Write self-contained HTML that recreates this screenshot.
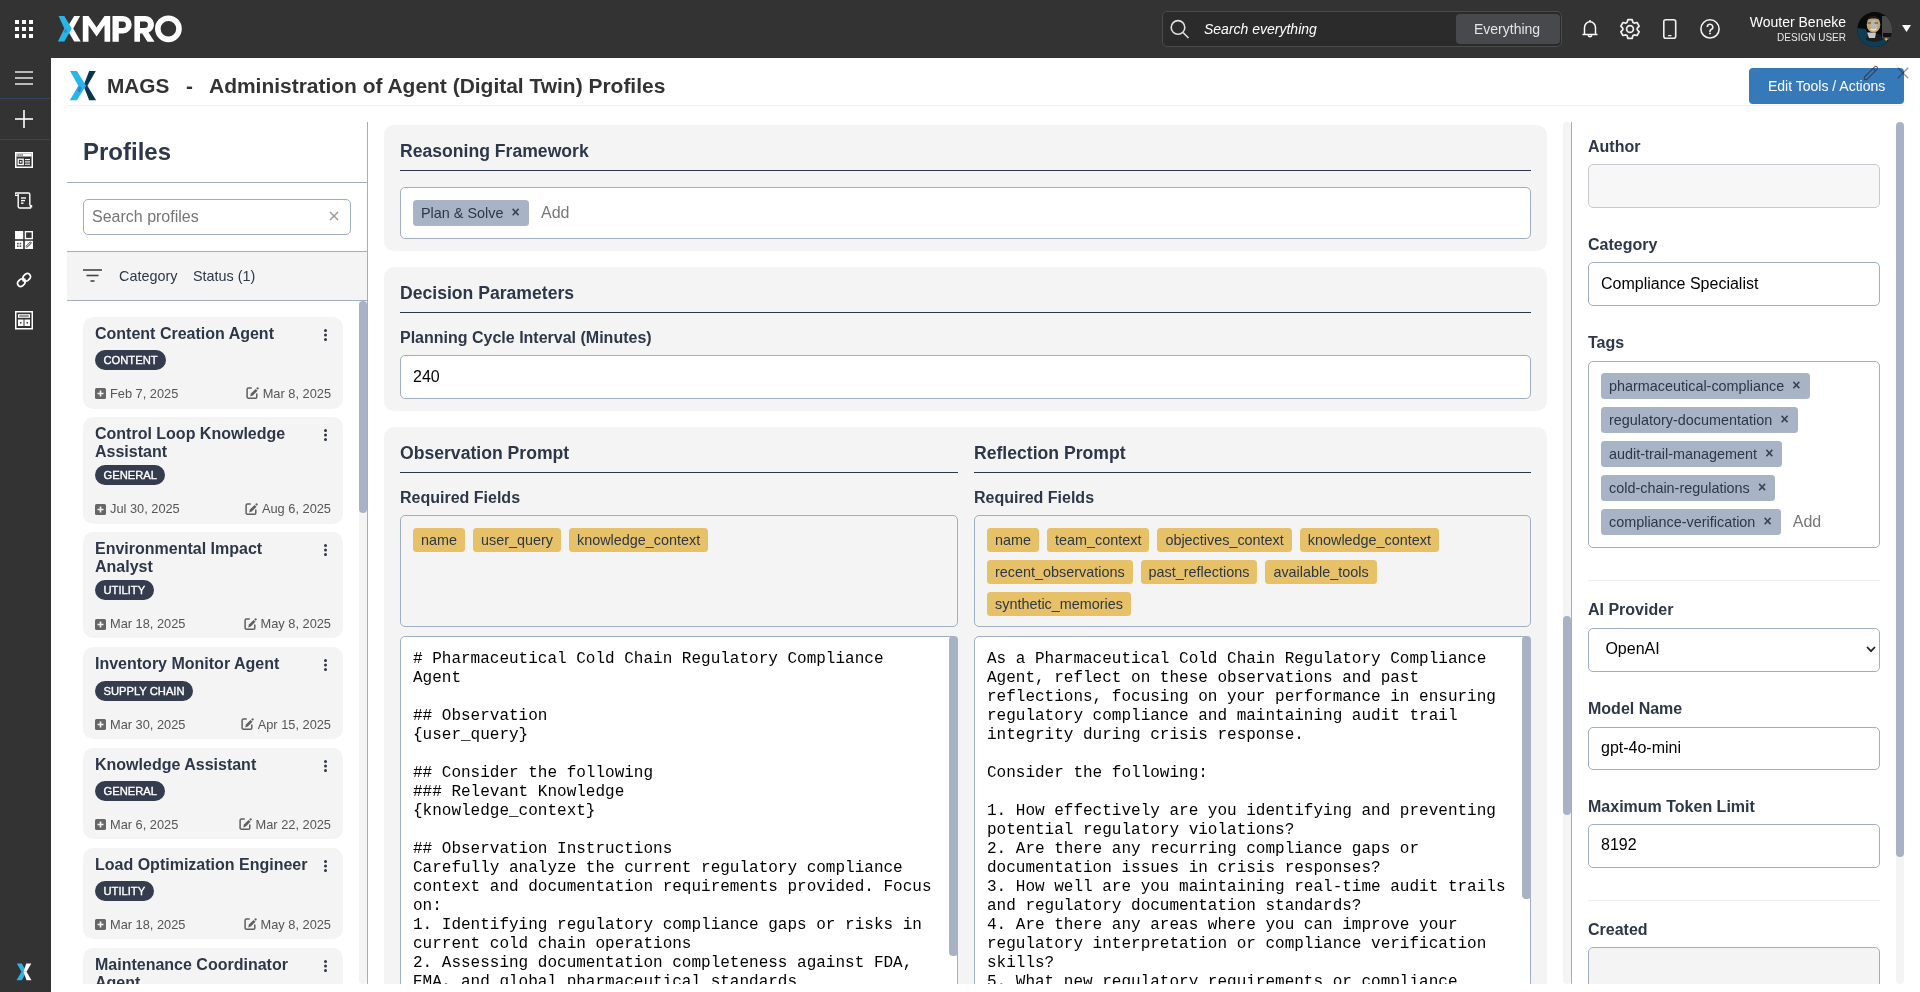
<!DOCTYPE html>
<html><head><meta charset="utf-8">
<style>
*{box-sizing:border-box;margin:0;padding:0}
html,body{width:1920px;height:992px;overflow:hidden;background:#fff;font-family:"Liberation Sans",sans-serif;color:#2d3748}
body{will-change:transform}
.abs{position:absolute}
#topbar{position:absolute;left:0;top:0;width:1920px;height:58px;background:#333333}
#side{position:absolute;left:0;top:58px;width:51px;height:934px;background:#333333}
.sep{position:absolute;left:0;width:50px;height:1px;background:repeating-linear-gradient(90deg,#3b4a62 0 1px,#363b44 1px 2px)}
.t{position:absolute;white-space:nowrap;line-height:1}
.card{position:absolute;left:83px;width:260px;background:#f4f4f4;border-radius:10px}
.ctitle{position:absolute;left:12px;width:220px;font-size:16px;font-weight:bold;line-height:18px;color:#2d3748}
.badge{position:absolute;left:12px;height:20px;border-radius:10px;background:#353c4e;color:#fff;font-size:11.2px;-webkit-text-stroke:0.35px #fff;line-height:20px;padding:0 8.5px;white-space:nowrap}
.kebab{position:absolute;left:240px;width:5px;height:12px}
.date{position:absolute;font-size:12.8px;color:#555;white-space:nowrap;line-height:1}
.sec{position:absolute;left:384px;width:1163px;background:#f4f4f4;border-radius:10px}
.h3{position:absolute;white-space:nowrap;font-size:17.6px;font-weight:bold;line-height:1;color:#2d3748}
.rule{position:absolute;height:1px;background:#2d3748}
.lbl{position:absolute;white-space:nowrap;font-size:16px;font-weight:bold;line-height:1;color:#2d3748}
.inp{position:absolute;background:#fff;border:1px solid #a0aec0;border-radius:5px}
.val{position:absolute;white-space:nowrap;font-size:16px;line-height:1;color:#000}
.chip{display:inline-block;height:26px;line-height:27.6px;border-radius:3.5px;background:#a9b3c6;color:#2d3748;font-size:14.4px;padding:0 9px 0 8px;white-space:nowrap}
.chip .x{display:inline-block;margin-left:8.2px;font-size:14px;font-weight:bold;position:relative;top:-1.5px;color:#3a4252}
.ychip{position:absolute;height:24px;line-height:25.4px;border-radius:3.5px;background:#e6c168;color:#2d3748;font-size:14.4px;padding:0 8px;white-space:nowrap}
.mono{position:absolute;margin-top:0.7px;font-family:"Liberation Mono",monospace;font-size:16px;line-height:19px;white-space:pre;color:#000}
.sb{position:absolute;background:#a8b2c4;border-radius:4px}
</style></head><body>
<div id="topbar">
  <!-- grid icon -->
  <svg class="abs" style="left:15px;top:20px" width="18" height="18" viewBox="0 0 18 18" fill="#fff">
    <rect x="0" y="0" width="4" height="4"/><rect x="7" y="0" width="4" height="4"/><rect x="14" y="0" width="4" height="4"/>
    <rect x="0" y="7" width="4" height="4"/><rect x="7" y="7" width="4" height="4"/><rect x="14" y="7" width="4" height="4"/>
    <rect x="0" y="14" width="4" height="4"/><rect x="7" y="14" width="4" height="4"/><rect x="14" y="14" width="4" height="4"/>
  </svg>
  <!-- XMPRO logo -->
  <svg class="abs" style="left:57px;top:15px" width="126" height="28" viewBox="0 0 126 28">
    <polygon points="17.2,1.1 23.1,1.1 16.2,13.5 23.7,26.5 17.2,26.5 9.5,13.5" fill="#fff"/>
    <polygon points="1.6,1.1 7.3,1.1 14.8,13.5 7.3,26.5 0.9,26.5 7.3,13.5" fill="#29b5e8"/>
    <polygon points="8.6,14.1 10.7,15.6 8.8,18.3 6.8,16.6" fill="#3a86cf"/>
    <polygon points="25.8,1 31.5,1 39.6,12.5 47.5,1 53.2,1 53.2,26.7 47.5,26.7 47.5,10 39.6,21.5 31.5,10 31.5,26.7 25.8,26.7" fill="#fff"/>
    <path d="M55.5,1 H66 A8.7,8.7 0 0 1 66,18.4 H61.8 V26.7 H55.5 Z M61.8,6.4 V13 H65.6 A3.3,3.3 0 0 0 65.6,6.4 Z" fill="#fff" fill-rule="evenodd"/>
    <path d="M77.4,1 H88 A8.6,8.6 0 0 1 91.5,17.6 L97.5,26.7 H90.5 L85.2,18.4 H83 V26.7 H77.4 Z M83,6.4 V13 H87.6 A3.3,3.3 0 0 0 87.6,6.4 Z" fill="#fff" fill-rule="evenodd"/>
    <circle cx="111.4" cy="13.8" r="10.6" fill="none" stroke="#fff" stroke-width="5.6"/>
  </svg>
  <!-- search -->
  <div class="abs" style="left:1162px;top:11px;width:400px;height:36px;background:#2b2b2b;border:1px solid #4b4b4b;border-radius:5px"></div>
  <svg class="abs" style="left:1169px;top:18px" width="22" height="22" viewBox="0 0 22 22" fill="none" stroke="#e0e0e0" stroke-width="1.6">
    <circle cx="9" cy="9.4" r="6.8"/><line x1="14" y1="14.5" x2="19.5" y2="20"/>
  </svg>
  <div class="t" style="left:1204px;top:21.7px;font-size:14px;font-style:italic;color:#fff">Search everything</div>
  <div class="abs" style="left:1456px;top:14px;width:104px;height:30px;background:#48494c;border-radius:4px"></div>
  <div class="t" style="left:1474px;top:21.8px;font-size:14px;color:#e4e4e4">Everything</div>
  <!-- bell -->
  <svg class="abs" style="left:1580px;top:18px" width="20" height="22" viewBox="0 0 20 22" fill="none" stroke="#fff" stroke-width="1.5" stroke-linejoin="round">
    <path d="M4.5,16.5 V9.5 A5.5,5.8 0 0 1 15.5,9.5 V16.5 Z M2.5,16.5 H17.5 M8.2,17.5 A1.9,1.9 0 0 0 11.8,17.5 M10,2 V3.5"/>
  </svg>
  <!-- gear -->
  <svg class="abs" style="left:1618px;top:17px" width="24" height="24" viewBox="0 0 24 24" fill="none" stroke="#f0f0f0" stroke-width="1.7" stroke-linejoin="round">
    <path d="M15.00,5.45 L14.10,2.63 L9.90,2.63 L9.00,5.45 L7.83,6.13 L4.94,5.50 L2.84,9.13 L4.83,11.33 L4.83,12.67 L2.84,14.87 L4.94,18.50 L7.83,17.87 L9.00,18.55 L9.90,21.37 L14.10,21.37 L15.00,18.55 L16.17,17.87 L19.06,18.50 L21.16,14.87 L19.17,12.67 L19.17,11.33 L21.16,9.13 L19.06,5.50 L16.17,6.13 Z"/>
    <circle cx="12" cy="12" r="3.4"/>
  </svg>
  <!-- phone -->
  <svg class="abs" style="left:1663px;top:19px" width="14" height="20" viewBox="0 0 14 20" fill="none" stroke="#f2f2f2" stroke-width="1.6">
    <rect x="0.8" y="0.8" width="11.9" height="18.4" rx="2"/><line x1="5.6" y1="16.6" x2="8" y2="16.6" stroke-width="1.4" stroke-linecap="round"/>
  </svg>
  <!-- help -->
  <svg class="abs" style="left:1699px;top:18px" width="22" height="22" viewBox="0 0 22 22" fill="none" stroke="#f2f2f2" stroke-width="1.6">
    <circle cx="11" cy="10.9" r="9.1"/>
    <path d="M8.3,9 A2.75,2.75 0 1 1 12.2,11.5 C11.3,11.9 11,12.4 11,13.2 V13.9"/>
    <rect x="10.1" y="14.7" width="1.8" height="1.5" fill="#f2f2f2" stroke="none"/>
  </svg>
  <div class="t" style="right:74px;top:15px;font-size:14px;color:#fff">Wouter Beneke</div>
  <div class="t" style="right:74px;top:33px;font-size:10px;color:#e8e8e8">DESIGN USER</div>
  <!-- avatar -->
  <svg class="abs" style="left:1857px;top:12px" width="36" height="36" viewBox="0 0 36 36">
    <defs><clipPath id="av"><circle cx="17.7" cy="17.6" r="17.5"/></clipPath></defs>
    <g clip-path="url(#av)">
      <rect width="36" height="36" fill="#0a0a0a"/>
      <rect x="25" y="4" width="11" height="24" fill="#4a4a4a"/>
      <rect x="26" y="21" width="9" height="4" fill="#111"/>
      <path d="M0,16 L9,17 L11,24 L26,26 L31,29 L31,36 L0,36 Z" fill="#0e3d56"/>
      <path d="M9,28 C9,24 12,21 17,21 C23,21 25,24 26,28 L17,30 Z" fill="#1e1e1e"/>
      <path d="M10,20.5 L19,20.5 L18,26 L12,26 Z" fill="#c8c8c8"/>
      <ellipse cx="16.5" cy="12.5" rx="6.8" ry="8" fill="#c2a66e"/>
      <ellipse cx="17" cy="13" rx="3.5" ry="5" fill="#b8b8b0"/>
      <path d="M10.5,11 H14 M17.5,11 H21" stroke="#444" stroke-width="1.2"/>
      <path d="M13.5,17 Q16.5,19 19.5,17" stroke="#eee" stroke-width="1.3" fill="none"/>
      <path d="M9.5,8 C11,2.5 22,2.5 23.5,8 C20,6 13,6 9.5,8 Z" fill="#1a1a1a"/>
      <rect x="28" y="26" width="2.5" height="2.5" fill="#c9a864" transform="rotate(45 29.2 27.2)"/>
    </g>
  </svg>
  <svg class="abs" style="left:1902px;top:25px" width="9" height="7" viewBox="0 0 9 7"><polygon points="0,0 9,0 4.5,7" fill="#fff"/></svg>
</div>

<div id="side">
  <svg class="abs" style="left:15px;top:13px" width="18" height="14" viewBox="0 0 18 14" stroke="#ddd" stroke-width="1.6"><line x1="0" y1="1" x2="18" y2="1"/><line x1="0" y1="7" x2="18" y2="7"/><line x1="0" y1="13" x2="18" y2="13"/></svg>
  <div class="sep" style="top:40px"></div>
  <svg class="abs" style="left:15px;top:52px" width="18" height="18" viewBox="0 0 18 18" stroke="#fff" stroke-width="1.6"><line x1="0" y1="9" x2="18" y2="9"/><line x1="9" y1="0" x2="9" y2="18"/></svg>
  <div class="sep" style="top:81px"></div>

  <svg class="abs" style="left:15px;top:94px" width="18" height="16" viewBox="0 0 18 16" fill="none" stroke="#fff">
    <rect x="0.75" y="0.75" width="16.5" height="14.5" stroke-width="1.5"/>
    <rect x="1.5" y="1.5" width="15" height="3" fill="#fff" stroke="none"/>
    <rect x="2.5" y="2.3" width="1.2" height="1.4" fill="#333" stroke="none"/><rect x="4.5" y="2.3" width="1.2" height="1.4" fill="#333" stroke="none"/><rect x="6.5" y="2.3" width="1.2" height="1.4" fill="#333" stroke="none"/>
    <rect x="3.2" y="7.2" width="5" height="5.3" stroke-width="1.3"/><rect x="4.9" y="9" width="1.6" height="1.6" fill="#fff" stroke="none"/>
    <line x1="10" y1="7.6" x2="15" y2="7.6" stroke-width="1.1"/><line x1="10" y1="9.9" x2="15" y2="9.9" stroke-width="1.1"/><line x1="10" y1="12.2" x2="15" y2="12.2" stroke-width="1.1"/>
  </svg>
  <svg class="abs" style="left:15px;top:134px" width="18" height="17" viewBox="0 0 18 17" fill="none" stroke="#fff" stroke-width="1.4">
    <path d="M1,1 H13.5 A1.3,1.3 0 0 1 14.8,2.3 V13.5"/>
    <path d="M1,1 A1.2,1.2 0 0 0 1,3.4 H3.2"/>
    <path d="M3.2,2 V14.5 A1.5,1.5 0 0 0 4.7,16 H16.2"/>
    <rect x="14.8" y="13" width="2.4" height="2.6" fill="#fff" stroke="none"/>
    <line x1="6" y1="6" x2="11" y2="6"/><line x1="6" y1="8.6" x2="10" y2="8.6"/><line x1="6" y1="11.2" x2="8.5" y2="11.2"/>
  </svg>
  <svg class="abs" style="left:15px;top:173px" width="18" height="18" viewBox="0 0 18 18">
    <rect x="0" y="0" width="8.2" height="8.2" fill="#fff"/>
    <rect x="10.4" y="0.7" width="6.9" height="6.9" fill="none" stroke="#fff" stroke-width="1.4"/>
    <rect x="0" y="9.8" width="8.2" height="8.2" fill="#fff"/>
    <rect x="2" y="11.8" width="1.6" height="1.6" fill="#555"/><rect x="4.6" y="11.8" width="1.6" height="1.6" fill="#555"/>
    <rect x="2" y="14.4" width="1.6" height="1.6" fill="#555"/><rect x="4.6" y="14.4" width="1.6" height="1.6" fill="#555"/>
    <rect x="9.8" y="9.8" width="8.2" height="8.2" fill="#fff"/>
    <path d="M11.8,15.5 L15.5,11.8" stroke="#555" stroke-width="2.4" stroke-linecap="round"/>
    <path d="M11.8,15.5 L15.5,11.8" stroke="#fff" stroke-width="0.9" stroke-linecap="round"/>
  </svg>
  <svg class="abs" style="left:15px;top:213px" width="18" height="18" viewBox="0 0 18 18" fill="none" stroke="#fff" stroke-width="1.7">
    <path d="M7.6,10.4 L10.4,7.6"/>
    <path d="M8.4,5.2 L10.6,3 A3.2,3.2 0 0 1 15,7.4 L12.8,9.6 A3.2,3.2 0 0 1 8.4,5.2 Z"/>
    <path d="M5.2,8.4 L3,10.6 A3.2,3.2 0 0 0 7.4,15 L9.6,12.8 A3.2,3.2 0 0 0 5.2,8.4 Z"/>
  </svg>
  <svg class="abs" style="left:15px;top:253px" width="18" height="19" viewBox="0 0 18 19">
    <rect x="0" y="0" width="18" height="18.5" fill="#fff"/>
    <rect x="1.5" y="1.5" width="15" height="15.5" fill="#333"/>
    <rect x="3" y="3.2" width="12" height="3.6" fill="#fff"/><rect x="4.2" y="4.5" width="9.6" height="1" fill="#333"/>
    <rect x="3" y="8.5" width="5.5" height="6.5" fill="#fff"/><rect x="9.5" y="8.5" width="5.5" height="6.5" fill="#fff"/>
    <rect x="5" y="11" width="1.5" height="1.5" fill="#333"/><rect x="11.5" y="11" width="1.5" height="1.5" fill="#333"/>
  </svg>
  <svg class="abs" style="left:16px;top:905px" width="16" height="18" viewBox="0 0 16 18">
    <polygon points="0.8,0.5 5.8,0.5 10.5,8.8 5.5,8.8" fill="#29b5e8"/>
    <polygon points="5.5,8.8 10.5,8.8 5.8,17.2 0.5,17.2" fill="#29b5e8"/>
    <polygon points="10.2,0.5 15.3,0.5 10.5,8.8 7.5,8.8" fill="#fff"/>
    <polygon points="7.5,8.8 10.5,8.8 15.5,17.2 10.5,17.2" fill="#fff"/>
  </svg>
</div>

<!-- HEADER -->
<svg class="abs" style="left:66px;top:68px" width="34" height="36" viewBox="0 0 34 36">
  <polygon points="23.2,3.1 29.8,3.1 21.4,17.8 30.1,32.3 23.2,32.3 17.4,17.8" fill="#0c3550"/>
  <polygon points="4,3.1 10.9,3.1 20,17.8 10.9,32.3 3.8,32.3 12.3,17.8" fill="#29b5e8"/>
  <polygon points="13.5,18.1 15.8,20 13.5,24.7 11.2,22.5" fill="#3a7fc8"/>
</svg>
<div class="t" style="left:107px;top:76px;font-size:20.8px;font-weight:bold;color:#333">MAGS</div>
<div class="t" style="left:186px;top:76px;font-size:20.8px;font-weight:bold;color:#333">-</div>
<div class="t" style="left:209px;top:75.8px;font-size:20.96px;font-weight:bold;color:#333">Administration of Agent (Digital Twin) Profiles</div>
<div class="abs" style="left:67px;top:105px;width:1837px;height:1px;background:#f0f0f0"></div>
<div class="abs" style="left:1749px;top:68px;width:155px;height:36px;background:#3679b9;border-radius:4px"></div>
<div class="t" style="left:1768px;top:79px;font-size:14px;color:#fff">Edit Tools / Actions</div>
<svg class="abs" style="left:1862px;top:64px" width="18" height="18" viewBox="0 0 18 18" fill="none" stroke="rgba(50,50,50,0.75)" stroke-width="1.1" stroke-linejoin="round">
  <path d="M2.5,13 L12.6,2.9 A1.6,1.6 0 0 1 15,5.3 L4.9,15.4 L2.3,15.6 Z"/><line x1="11.2" y1="4.3" x2="13.6" y2="6.7"/>
</svg>
<svg class="abs" style="left:1897px;top:67px" width="12" height="12" viewBox="0 0 12 12" stroke="rgba(40,40,40,0.5)" stroke-width="1.3"><line x1="0.8" y1="0.8" x2="11.2" y2="11.2"/><line x1="11.2" y1="0.8" x2="0.8" y2="11.2"/></svg>

<!-- LEFT PANEL -->
<div class="t" style="left:83px;top:140px;font-size:24px;font-weight:bold;color:#2d3748">Profiles</div>
<div class="abs" style="left:67px;top:182px;width:301px;height:1px;background:#a0aec0"></div>
<div class="abs" style="left:367px;top:122px;width:1px;height:862px;background:#a0aec0"></div>
<div class="abs" style="left:83px;top:199px;width:268px;height:36px;border:1px solid #a0aec0;border-radius:5px;background:#fff"></div>
<div class="t" style="left:92px;top:209.2px;font-size:16px;color:#757575">Search profiles</div>
<svg class="abs" style="left:329px;top:211px" width="10" height="10" viewBox="0 0 10 10" stroke="#999" stroke-width="1.4"><line x1="1" y1="1" x2="9" y2="9"/><line x1="9" y1="1" x2="1" y2="9"/></svg>
<div class="abs" style="left:67px;top:251px;width:300px;height:50px;background:#f4f4f4;border-top:1px solid #a0aec0;border-bottom:1px solid #a0aec0"></div>
<svg class="abs" style="left:83px;top:269px" width="20" height="14" viewBox="0 0 20 14" stroke="#444" stroke-width="1.6"><line x1="0" y1="1" x2="19" y2="1"/><line x1="3.5" y1="6.5" x2="15.5" y2="6.5"/><line x1="7.5" y1="12" x2="11.5" y2="12"/></svg>
<div class="t" style="left:119px;top:269px;font-size:14.4px;color:#2d3748">Category</div>
<div class="t" style="left:193px;top:269px;font-size:14.4px;color:#2d3748">Status (1)</div>
<div class="abs" style="left:359px;top:301px;width:8px;height:683px;background:#f4f4f4;border-radius:0 0 4px 4px"></div>
<div class="abs" style="left:359px;top:301px;width:8px;height:212px;background:#a8b2c4;border-radius:4px"></div>
<div class="abs" style="left:67px;top:301px;width:292px;height:683px;overflow:hidden">
<div style="position:absolute;left:-67px;top:-301px;width:400px;height:1000px">
<div class="card" style="top:317px;height:92px"><div class="ctitle" style="top:7.9px">Content Creation Agent</div><svg class="kebab" style="top:12px" viewBox="0 0 5 12"><circle cx="2.5" cy="1.6" r="1.5" fill="#2d3748"/><circle cx="2.5" cy="6" r="1.5" fill="#2d3748"/><circle cx="2.5" cy="10.4" r="1.5" fill="#2d3748"/></svg><div class="badge" style="top:33px">CONTENT</div><svg class="abs" style="left:12px;top:71px" width="11" height="11" viewBox="0 0 11 11"><rect width="11" height="11" rx="1.5" fill="#666"/><path d="M5.5,2.5 V8.5 M2.5,5.5 H8.5" stroke="#f4f4f4" stroke-width="1.6"/></svg><div class="date" style="left:27px;top:70.5px">Feb 7, 2025</div><div class="date" style="right:12px;top:70.5px;display:flex;align-items:center"><svg width="13" height="12" viewBox="0 0 13 12" style="margin:-1px 4px 0 0"><path d="M5.2,1.1 H2.4 A1.3,1.3 0 0 0 1.1,2.4 V9.9 A1.3,1.3 0 0 0 2.4,11.2 H9.5 A1.3,1.3 0 0 0 10.8,9.9 V6.9" fill="none" stroke="#5f5f5f" stroke-width="1.5" stroke-linecap="round"/><polygon points="4.2,9.4 4.9,6.6 9.6,1.9 11.5,3.8 6.8,8.5" fill="#5f5f5f"/><path d="M10.2,1.3 L11,0.5 A0.9,0.9 0 0 1 12.2,0.5 L12.5,0.8 A0.9,0.9 0 0 1 12.5,2 L11.7,2.8 Z" fill="#5f5f5f"/></svg>Mar 8, 2025</div></div>
<div class="card" style="top:417px;height:107px"><div class="ctitle" style="top:7.9px">Control Loop Knowledge<br>Assistant</div><svg class="kebab" style="top:12px" viewBox="0 0 5 12"><circle cx="2.5" cy="1.6" r="1.5" fill="#2d3748"/><circle cx="2.5" cy="6" r="1.5" fill="#2d3748"/><circle cx="2.5" cy="10.4" r="1.5" fill="#2d3748"/></svg><div class="badge" style="top:47.5px">GENERAL</div><svg class="abs" style="left:12px;top:86.5px" width="11" height="11" viewBox="0 0 11 11"><rect width="11" height="11" rx="1.5" fill="#666"/><path d="M5.5,2.5 V8.5 M2.5,5.5 H8.5" stroke="#f4f4f4" stroke-width="1.6"/></svg><div class="date" style="left:27px;top:86.0px">Jul 30, 2025</div><div class="date" style="right:12px;top:86.0px;display:flex;align-items:center"><svg width="13" height="12" viewBox="0 0 13 12" style="margin:-1px 4px 0 0"><path d="M5.2,1.1 H2.4 A1.3,1.3 0 0 0 1.1,2.4 V9.9 A1.3,1.3 0 0 0 2.4,11.2 H9.5 A1.3,1.3 0 0 0 10.8,9.9 V6.9" fill="none" stroke="#5f5f5f" stroke-width="1.5" stroke-linecap="round"/><polygon points="4.2,9.4 4.9,6.6 9.6,1.9 11.5,3.8 6.8,8.5" fill="#5f5f5f"/><path d="M10.2,1.3 L11,0.5 A0.9,0.9 0 0 1 12.2,0.5 L12.5,0.8 A0.9,0.9 0 0 1 12.5,2 L11.7,2.8 Z" fill="#5f5f5f"/></svg>Aug 6, 2025</div></div>
<div class="card" style="top:532px;height:106px"><div class="ctitle" style="top:7.9px">Environmental Impact<br>Analyst</div><svg class="kebab" style="top:12px" viewBox="0 0 5 12"><circle cx="2.5" cy="1.6" r="1.5" fill="#2d3748"/><circle cx="2.5" cy="6" r="1.5" fill="#2d3748"/><circle cx="2.5" cy="10.4" r="1.5" fill="#2d3748"/></svg><div class="badge" style="top:47.5px">UTILITY</div><svg class="abs" style="left:12px;top:86.5px" width="11" height="11" viewBox="0 0 11 11"><rect width="11" height="11" rx="1.5" fill="#666"/><path d="M5.5,2.5 V8.5 M2.5,5.5 H8.5" stroke="#f4f4f4" stroke-width="1.6"/></svg><div class="date" style="left:27px;top:86.0px">Mar 18, 2025</div><div class="date" style="right:12px;top:86.0px;display:flex;align-items:center"><svg width="13" height="12" viewBox="0 0 13 12" style="margin:-1px 4px 0 0"><path d="M5.2,1.1 H2.4 A1.3,1.3 0 0 0 1.1,2.4 V9.9 A1.3,1.3 0 0 0 2.4,11.2 H9.5 A1.3,1.3 0 0 0 10.8,9.9 V6.9" fill="none" stroke="#5f5f5f" stroke-width="1.5" stroke-linecap="round"/><polygon points="4.2,9.4 4.9,6.6 9.6,1.9 11.5,3.8 6.8,8.5" fill="#5f5f5f"/><path d="M10.2,1.3 L11,0.5 A0.9,0.9 0 0 1 12.2,0.5 L12.5,0.8 A0.9,0.9 0 0 1 12.5,2 L11.7,2.8 Z" fill="#5f5f5f"/></svg>May 8, 2025</div></div>
<div class="card" style="top:647px;height:92px"><div class="ctitle" style="top:7.9px">Inventory Monitor Agent</div><svg class="kebab" style="top:12px" viewBox="0 0 5 12"><circle cx="2.5" cy="1.6" r="1.5" fill="#2d3748"/><circle cx="2.5" cy="6" r="1.5" fill="#2d3748"/><circle cx="2.5" cy="10.4" r="1.5" fill="#2d3748"/></svg><div class="badge" style="top:34px">SUPPLY CHAIN</div><svg class="abs" style="left:12px;top:72px" width="11" height="11" viewBox="0 0 11 11"><rect width="11" height="11" rx="1.5" fill="#666"/><path d="M5.5,2.5 V8.5 M2.5,5.5 H8.5" stroke="#f4f4f4" stroke-width="1.6"/></svg><div class="date" style="left:27px;top:71.5px">Mar 30, 2025</div><div class="date" style="right:12px;top:71.5px;display:flex;align-items:center"><svg width="13" height="12" viewBox="0 0 13 12" style="margin:-1px 4px 0 0"><path d="M5.2,1.1 H2.4 A1.3,1.3 0 0 0 1.1,2.4 V9.9 A1.3,1.3 0 0 0 2.4,11.2 H9.5 A1.3,1.3 0 0 0 10.8,9.9 V6.9" fill="none" stroke="#5f5f5f" stroke-width="1.5" stroke-linecap="round"/><polygon points="4.2,9.4 4.9,6.6 9.6,1.9 11.5,3.8 6.8,8.5" fill="#5f5f5f"/><path d="M10.2,1.3 L11,0.5 A0.9,0.9 0 0 1 12.2,0.5 L12.5,0.8 A0.9,0.9 0 0 1 12.5,2 L11.7,2.8 Z" fill="#5f5f5f"/></svg>Apr 15, 2025</div></div>
<div class="card" style="top:748px;height:91px"><div class="ctitle" style="top:7.9px">Knowledge Assistant</div><svg class="kebab" style="top:12px" viewBox="0 0 5 12"><circle cx="2.5" cy="1.6" r="1.5" fill="#2d3748"/><circle cx="2.5" cy="6" r="1.5" fill="#2d3748"/><circle cx="2.5" cy="10.4" r="1.5" fill="#2d3748"/></svg><div class="badge" style="top:33px">GENERAL</div><svg class="abs" style="left:12px;top:71px" width="11" height="11" viewBox="0 0 11 11"><rect width="11" height="11" rx="1.5" fill="#666"/><path d="M5.5,2.5 V8.5 M2.5,5.5 H8.5" stroke="#f4f4f4" stroke-width="1.6"/></svg><div class="date" style="left:27px;top:70.5px">Mar 6, 2025</div><div class="date" style="right:12px;top:70.5px;display:flex;align-items:center"><svg width="13" height="12" viewBox="0 0 13 12" style="margin:-1px 4px 0 0"><path d="M5.2,1.1 H2.4 A1.3,1.3 0 0 0 1.1,2.4 V9.9 A1.3,1.3 0 0 0 2.4,11.2 H9.5 A1.3,1.3 0 0 0 10.8,9.9 V6.9" fill="none" stroke="#5f5f5f" stroke-width="1.5" stroke-linecap="round"/><polygon points="4.2,9.4 4.9,6.6 9.6,1.9 11.5,3.8 6.8,8.5" fill="#5f5f5f"/><path d="M10.2,1.3 L11,0.5 A0.9,0.9 0 0 1 12.2,0.5 L12.5,0.8 A0.9,0.9 0 0 1 12.5,2 L11.7,2.8 Z" fill="#5f5f5f"/></svg>Mar 22, 2025</div></div>
<div class="card" style="top:848px;height:91px"><div class="ctitle" style="top:7.9px">Load Optimization Engineer</div><svg class="kebab" style="top:12px" viewBox="0 0 5 12"><circle cx="2.5" cy="1.6" r="1.5" fill="#2d3748"/><circle cx="2.5" cy="6" r="1.5" fill="#2d3748"/><circle cx="2.5" cy="10.4" r="1.5" fill="#2d3748"/></svg><div class="badge" style="top:33px">UTILITY</div><svg class="abs" style="left:12px;top:71px" width="11" height="11" viewBox="0 0 11 11"><rect width="11" height="11" rx="1.5" fill="#666"/><path d="M5.5,2.5 V8.5 M2.5,5.5 H8.5" stroke="#f4f4f4" stroke-width="1.6"/></svg><div class="date" style="left:27px;top:70.5px">Mar 18, 2025</div><div class="date" style="right:12px;top:70.5px;display:flex;align-items:center"><svg width="13" height="12" viewBox="0 0 13 12" style="margin:-1px 4px 0 0"><path d="M5.2,1.1 H2.4 A1.3,1.3 0 0 0 1.1,2.4 V9.9 A1.3,1.3 0 0 0 2.4,11.2 H9.5 A1.3,1.3 0 0 0 10.8,9.9 V6.9" fill="none" stroke="#5f5f5f" stroke-width="1.5" stroke-linecap="round"/><polygon points="4.2,9.4 4.9,6.6 9.6,1.9 11.5,3.8 6.8,8.5" fill="#5f5f5f"/><path d="M10.2,1.3 L11,0.5 A0.9,0.9 0 0 1 12.2,0.5 L12.5,0.8 A0.9,0.9 0 0 1 12.5,2 L11.7,2.8 Z" fill="#5f5f5f"/></svg>May 8, 2025</div></div>
<div class="card" style="top:948px;height:107px"><div class="ctitle" style="top:7.9px">Maintenance Coordinator<br>Agent</div><svg class="kebab" style="top:12px" viewBox="0 0 5 12"><circle cx="2.5" cy="1.6" r="1.5" fill="#2d3748"/><circle cx="2.5" cy="6" r="1.5" fill="#2d3748"/><circle cx="2.5" cy="10.4" r="1.5" fill="#2d3748"/></svg><div class="badge" style="top:47.5px">GENERAL</div><svg class="abs" style="left:12px;top:85.5px" width="11" height="11" viewBox="0 0 11 11"><rect width="11" height="11" rx="1.5" fill="#666"/><path d="M5.5,2.5 V8.5 M2.5,5.5 H8.5" stroke="#f4f4f4" stroke-width="1.6"/></svg><div class="date" style="left:27px;top:85.0px">Mar 18, 2025</div><div class="date" style="right:12px;top:85.0px;display:flex;align-items:center"><svg width="13" height="12" viewBox="0 0 13 12" style="margin:-1px 4px 0 0"><path d="M5.2,1.1 H2.4 A1.3,1.3 0 0 0 1.1,2.4 V9.9 A1.3,1.3 0 0 0 2.4,11.2 H9.5 A1.3,1.3 0 0 0 10.8,9.9 V6.9" fill="none" stroke="#5f5f5f" stroke-width="1.5" stroke-linecap="round"/><polygon points="4.2,9.4 4.9,6.6 9.6,1.9 11.5,3.8 6.8,8.5" fill="#5f5f5f"/><path d="M10.2,1.3 L11,0.5 A0.9,0.9 0 0 1 12.2,0.5 L12.5,0.8 A0.9,0.9 0 0 1 12.5,2 L11.7,2.8 Z" fill="#5f5f5f"/></svg>May 8, 2025</div></div>
</div></div>

<!-- MIDDLE -->
<div class="abs" style="left:368px;top:106px;width:1203px;height:878px;overflow:hidden">
<div style="position:absolute;left:-368px;top:-106px;width:1920px;height:992px">
<div class="sec" style="top:125px;height:126px"></div>
<div class="h3" style="left:400px;top:143.2px">Reasoning Framework</div>
<div class="rule" style="left:400px;top:170px;width:1131px"></div>
<div class="inp" style="left:400px;top:187px;width:1131px;height:52px"></div>
<div class="abs" style="left:413px;top:200px"><span class="chip">Plan &amp; Solve<span class="x">&#215;</span></span></div>
<div class="t" style="left:541px;top:204.5px;font-size:16px;color:#777">Add</div>

<div class="sec" style="top:267px;height:144px"></div>
<div class="h3" style="left:400px;top:285.1px">Decision Parameters</div>
<div class="rule" style="left:400px;top:312px;width:1131px"></div>
<div class="lbl" style="left:400px;top:330px">Planning Cycle Interval (Minutes)</div>
<div class="inp" style="left:400px;top:355px;width:1131px;height:44px"></div>
<div class="val" style="left:413px;top:368.5px">240</div>

<div class="sec" style="top:427px;height:700px"></div>
<div class="h3" style="left:400px;top:445.4px">Observation Prompt</div>
<div class="rule" style="left:400px;top:471.5px;width:557.5px"></div>
<div class="lbl" style="left:400px;top:490.1px">Required Fields</div>
<div class="inp" style="left:400px;top:515px;width:557.5px;height:111.5px;background:#f4f4f4"></div>
<div class="abs" style="left:413px;top:528px;display:flex;gap:8px"><div class="ychip" style="position:static">name</div><div class="ychip" style="position:static">user_query</div><div class="ychip" style="position:static">knowledge_context</div></div>
<div class="inp" style="left:400px;top:635.5px;width:557.5px;height:500px"></div>
<div class="mono" style="left:413px;top:649.4px"># Pharmaceutical Cold Chain Regulatory Compliance
Agent

## Observation
&#123;user_query}

## Consider the following
### Relevant Knowledge
&#123;knowledge_context}

## Observation Instructions
Carefully analyze the current regulatory compliance
context and documentation requirements provided. Focus
on:
1. Identifying regulatory compliance gaps or risks in
current cold chain operations
2. Assessing documentation completeness against FDA,
EMA, and global pharmaceutical standards</div>
<div class="sb" style="left:949px;top:636px;width:8.5px;height:320px"></div>

<div class="h3" style="left:974px;top:445.4px">Reflection Prompt</div>
<div class="rule" style="left:974px;top:471.5px;width:556.5px"></div>
<div class="lbl" style="left:974px;top:490.1px">Required Fields</div>
<div class="inp" style="left:974px;top:515px;width:556.5px;height:111.5px;background:#f4f4f4"></div>
<div class="abs" style="left:987px;top:528px;display:flex;gap:8px"><div class="ychip" style="position:static">name</div><div class="ychip" style="position:static">team_context</div><div class="ychip" style="position:static">objectives_context</div><div class="ychip" style="position:static">knowledge_context</div></div><div class="abs" style="left:987px;top:560px;display:flex;gap:8px"><div class="ychip" style="position:static">recent_observations</div><div class="ychip" style="position:static">past_reflections</div><div class="ychip" style="position:static">available_tools</div></div><div class="abs" style="left:987px;top:592px;display:flex;gap:8px"><div class="ychip" style="position:static">synthetic_memories</div></div>
<div class="inp" style="left:974px;top:635.5px;width:556.5px;height:500px"></div>
<div class="mono" style="left:987px;top:649.4px">As a Pharmaceutical Cold Chain Regulatory Compliance
Agent, reflect on these observations and past
reflections, focusing on your performance in ensuring
regulatory compliance and maintaining audit trail
integrity during crisis response.

Consider the following:

1. How effectively are you identifying and preventing
potential regulatory violations?
2. Are there any recurring compliance gaps or
documentation issues in crisis responses?
3. How well are you maintaining real-time audit trails
and regulatory documentation standards?
4. Are there any areas where you can improve your
regulatory interpretation or compliance verification
skills?
5. What new regulatory requirements or compliance</div>
<div class="sb" style="left:1522px;top:636px;width:8.5px;height:263px"></div>

<div class="abs" style="left:1563px;top:122px;width:8px;height:862px;background:#f4f4f4;border-radius:4px"></div>
<div class="sb" style="left:1563px;top:616px;width:8px;height:199px"></div>
</div></div>

<!-- RIGHT -->
<div class="abs" style="left:1571px;top:122px;width:1px;height:862px;background:#a0aec0"></div>
<div class="abs" style="left:1572px;top:106px;width:348px;height:878px;overflow:hidden">
<div style="position:absolute;left:-1572px;top:-106px;width:1920px;height:992px">
<div class="lbl" style="left:1588px;top:138.65px">Author</div><div class="inp" style="left:1588px;top:164px;width:292px;height:43.5px;background:#f7f7f7;border-color:#c6c9cd"></div><div class="lbl" style="left:1588px;top:236.75px">Category</div><div class="inp" style="left:1588px;top:262px;width:292px;height:44px;background:#fff;border-color:#a0aec0"></div><div class="val" style="left:1601px;top:276.05px">Compliance Specialist</div><div class="lbl" style="left:1588px;top:334.75px">Tags</div><div class="inp" style="left:1588px;top:360.5px;width:292px;height:187.5px"></div><div class="abs" style="left:1601px;top:373px;display:flex;align-items:center"><span class="chip" style="height:25.6px;line-height:27.2px">pharmaceutical-compliance<span class="x">&#215;</span></span></div><div class="abs" style="left:1601px;top:407px;display:flex;align-items:center"><span class="chip" style="height:25.6px;line-height:27.2px">regulatory-documentation<span class="x">&#215;</span></span></div><div class="abs" style="left:1601px;top:441px;display:flex;align-items:center"><span class="chip" style="height:25.6px;line-height:27.2px">audit-trail-management<span class="x">&#215;</span></span></div><div class="abs" style="left:1601px;top:475px;display:flex;align-items:center"><span class="chip" style="height:25.6px;line-height:27.2px">cold-chain-regulations<span class="x">&#215;</span></span></div><div class="abs" style="left:1601px;top:509px;display:flex;align-items:center"><span class="chip" style="height:25.6px;line-height:27.2px">compliance-verification<span class="x">&#215;</span></span><span style="margin-left:12px;font-size:16px;color:#777">Add</span></div><div class="abs" style="left:1588px;top:579.5px;width:292px;height:1px;background:#ececec"></div><div class="lbl" style="left:1588px;top:602.05px">AI Provider</div><div class="inp" style="left:1588px;top:627.5px;width:292px;height:44px;background:#fff;border-color:#a0aec0"></div><div class="val" style="left:1605.4px;top:641.05px">OpenAI</div><svg class="abs" style="left:1866px;top:645.5px" width="10" height="7" viewBox="0 0 10 7" fill="none" stroke="#222" stroke-width="1.8"><polyline points="1,1 5,5.2 9,1"/></svg><div class="lbl" style="left:1588px;top:700.85px">Model Name</div><div class="inp" style="left:1588px;top:726.5px;width:292px;height:43px;background:#fff;border-color:#a0aec0"></div><div class="val" style="left:1601px;top:739.5px">gpt-4o-mini</div><div class="lbl" style="left:1588px;top:798.85px">Maximum Token Limit</div><div class="inp" style="left:1588px;top:824px;width:292px;height:44px;background:#fff;border-color:#a0aec0"></div><div class="val" style="left:1601px;top:837px">8192</div><div class="abs" style="left:1588px;top:900px;width:292px;height:1px;background:#ececec"></div><div class="lbl" style="left:1588px;top:922.05px">Created</div><div class="inp" style="left:1588px;top:947px;width:292px;height:44px;background:#f4f4f4;border-color:#a0aec0"></div>
<div class="abs" style="left:1896px;top:122px;width:8px;height:862px;background:#f4f4f4;border-radius:4px"></div>
<div class="sb" style="left:1896px;top:122px;width:8px;height:735px"></div>
</div></div>

</body></html>
